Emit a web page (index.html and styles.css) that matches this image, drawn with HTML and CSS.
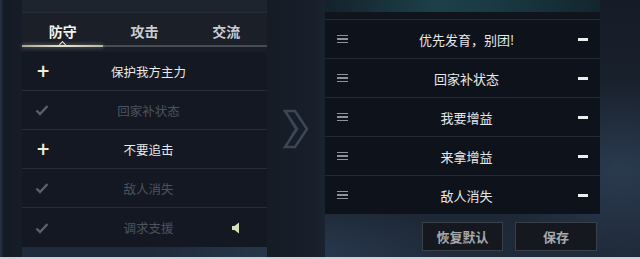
FILE: index.html
```html
<!DOCTYPE html>
<html lang="zh">
<head>
<meta charset="utf-8">
<link rel="stylesheet" href="styles.css">
</head>
<body>
<div class="screen">
  <div class="main">
    <div class="edge"></div>
    <section class="left">
      <div class="left-top"></div>
      <div class="tabs">
        <div class="tab active">防守<span class="caret"></span></div>
        <div class="tab">攻击</div>
        <div class="tab">交流</div>
      </div>
      <div class="tabline"><div class="tabline-active"></div></div>
      <div class="list">
        <div class="row on"><span class="ico plus">+</span><span class="label">保护我方主力</span><span class="aux"></span></div>
        <div class="row off"><span class="ico check"><svg width="14" height="12" viewBox="0 0 14 12"><path d="M1.5 6.5 L5 10 L12.5 2" fill="none" stroke="currentColor" stroke-width="2.4"/></svg></span><span class="label">回家补状态</span><span class="aux"></span></div>
        <div class="row on"><span class="ico plus">+</span><span class="label">不要追击</span><span class="aux"></span></div>
        <div class="row off"><span class="ico check"><svg width="14" height="12" viewBox="0 0 14 12"><path d="M1.5 6.5 L5 10 L12.5 2" fill="none" stroke="currentColor" stroke-width="2.4"/></svg></span><span class="label">敌人消失</span><span class="aux"></span></div>
        <div class="row off"><span class="ico check"><svg width="14" height="12" viewBox="0 0 14 12"><path d="M1.5 6.5 L5 10 L12.5 2" fill="none" stroke="currentColor" stroke-width="2.4"/></svg></span><span class="label">调求支援</span><span class="aux"><svg width="8" height="12" viewBox="0 0 8 12"><path d="M0 4 H2.5 L7 0.5 V11.5 L2.5 8 H0 Z" fill="#d8e0b8"/></svg></span></div>
      </div>
    </section>
    <div class="middle">
      <svg width="26" height="40" viewBox="0 0 26 40"><path d="M2 2 L12 2 L24 20 L12 38 L2 38 L14 20 Z" fill="none" stroke="#3c4656" stroke-width="2.5" stroke-linejoin="miter"/><path d="M7 10 L13 20 L7 30" fill="none" stroke="#3c4656" stroke-width="2"/></svg>
    </div>
    <section class="right">
      <div class="right-top"></div>
      <div class="right-head"></div>
      <div class="rlist">
        <div class="rrow"><span class="menu"><i></i><i></i><i></i></span><span class="rlabel">优先发育，别团!</span><span class="minus"></span></div>
        <div class="rrow"><span class="menu"><i></i><i></i><i></i></span><span class="rlabel">回家补状态</span><span class="minus"></span></div>
        <div class="rrow"><span class="menu"><i></i><i></i><i></i></span><span class="rlabel">我要增益</span><span class="minus"></span></div>
        <div class="rrow"><span class="menu"><i></i><i></i><i></i></span><span class="rlabel">来拿增益</span><span class="minus"></span></div>
        <div class="rrow"><span class="menu"><i></i><i></i><i></i></span><span class="rlabel">敌人消失</span><span class="minus"></span></div>
      </div>
      <div class="actions">
        <button class="btn reset">恢复默认</button>
        <button class="btn save">保存</button>
      </div>
    </section>
  </div>
  <div class="footer"></div>
</div>
</body>
</html>
```

FILE: styles.css
```css
html, body {
  margin: 0;
  padding: 0;
}
body {
  width: 640px;
  height: 259px;
  overflow: hidden;
  font-family: "Noto Sans CJK SC", "Noto Sans", sans-serif;
  background: #1a2230;
}
.screen {
  width: 640px;
  height: 259px;
  display: flex;
  flex-direction: column;
  background:
    radial-gradient(ellipse 120px 90px at 620px 170px, rgba(70,100,130,0.35), transparent),
    radial-gradient(ellipse 160px 60px at 300px 260px, rgba(60,90,120,0.35), transparent),
    linear-gradient(180deg, #161c27 0%, #1b2432 60%, #22304200 100%),
    #1f2a3a;
}
.main {
  flex: 1;
  display: flex;
}
.edge {
  width: 22px;
  background: linear-gradient(90deg, #2a3444 0px, #141a24 4px, #161d28 100%);
}
.left {
  width: 245px;
  display: flex;
  flex-direction: column;
  height: 248px;
}
.left-top {
  height: 12px;
  background: #1e242e;
  border-bottom: 1px solid #262c36;
}
.tabs {
  height: 32px;
  display: flex;
  background: #1a1f28;
}
.tab {
  flex: 1;
  position: relative;
  display: flex;
  align-items: center;
  justify-content: center;
  font-size: 14px;
  font-weight: 700;
  color: #c9ccd0;
  padding-top: 3px;
  box-sizing: border-box;
}
.tab.active {
  color: #f2f2ee;
}
.caret {
  position: absolute;
  left: 50%;
  bottom: -2px;
  width: 4px;
  height: 4px;
  margin-left: -3px;
  border-left: 1.5px solid #e8e6d6;
  border-top: 1.5px solid #e8e6d6;
  transform: rotate(45deg);
}
.tabline {
  height: 2px;
  background: #474d55;
  display: flex;
}
.tabline-active {
  width: 81px;
  background: linear-gradient(90deg, #a8a892, #e6e4cc 50%, #b8b8a4);
  box-shadow: 0 0 4px rgba(230,228,200,0.5);
}
.list {
  margin-top: 5px;
  display: flex;
  flex-direction: column;
  background: #141822;
}
.row {
  height: 39px;
  display: flex;
  align-items: center;
  border-bottom: 1px solid #272d38;
  box-sizing: border-box;
}
.row:last-child {
  border-bottom: none;
}
.ico {
  width: 50px;
  padding-left: 13px;
  box-sizing: border-box;
  display: flex;
  align-items: center;
}
.plus {
  color: #eeedd8;
  font-size: 17px;
  font-weight: 700;
  font-family: "DejaVu Sans", sans-serif;
  line-height: 1;
  padding-left: 14px;
}
.check {
  color: #59606b;
}
.label {
  flex: 1;
  text-align: center;
  font-size: 12.5px;
}
.row.on .label {
  color: #e8eaec;
}
.row.off .label {
  color: #4c535f;
}
.aux {
  width: 42px;
  padding-left: 7px;
  box-sizing: border-box;
  display: flex;
  align-items: center;
}
.middle {
  width: 58px;
  display: flex;
  align-items: center;
  justify-content: center;
  background: linear-gradient(90deg, #161c26, #181f2a 80%, #1a2230);
}
.right {
  width: 275px;
  display: flex;
  flex-direction: column;
}
.right-top {
  height: 12px;
  background: linear-gradient(90deg, #13222c 0%, #1d4048 40%, #1a3a44 60%, #13262e 100%);
}
.right-head {
  height: 7px;
  background: #10151d;
  border-bottom: 1px solid #252b36;
}
.rlist {
  display: flex;
  flex-direction: column;
  background: #0e121a;
}
.rrow {
  height: 39px;
  display: flex;
  align-items: center;
  border-bottom: 1px solid #232a35;
  box-sizing: border-box;
}
.rrow:last-child {
  border-bottom: none;
  height: 38px;
}
.menu {
  width: 40px;
  padding-left: 12px;
  box-sizing: border-box;
  display: flex;
  flex-direction: column;
  gap: 2px;
}
.menu i {
  display: block;
  width: 11px;
  height: 1.5px;
  background: #8a939e;
}
.rlabel {
  flex: 1;
  text-align: center;
  font-size: 13px;
  color: #e6e8ea;
  padding-right: 10px;
}
.minus {
  width: 22px;
  display: flex;
  justify-content: flex-start;
}
.minus::before {
  content: "";
  display: block;
  width: 10px;
  height: 3px;
  background: #eceeee;
}
.actions {
  display: flex;
  justify-content: flex-end;
  gap: 12px;
  margin-top: 8px;
  padding-right: 3px;
}
.btn {
  height: 29px;
  border: 1px solid #3a4048;
  background: #15181e;
  color: #a6aaae;
  font-family: "Noto Sans CJK SC", sans-serif;
  font-size: 13px;
  font-weight: 700;
  padding: 0;
}
.reset { width: 81px; }
.save { width: 82px; }
.footer {
  height: 2px;
  background: #cdd2d8;
}
```
